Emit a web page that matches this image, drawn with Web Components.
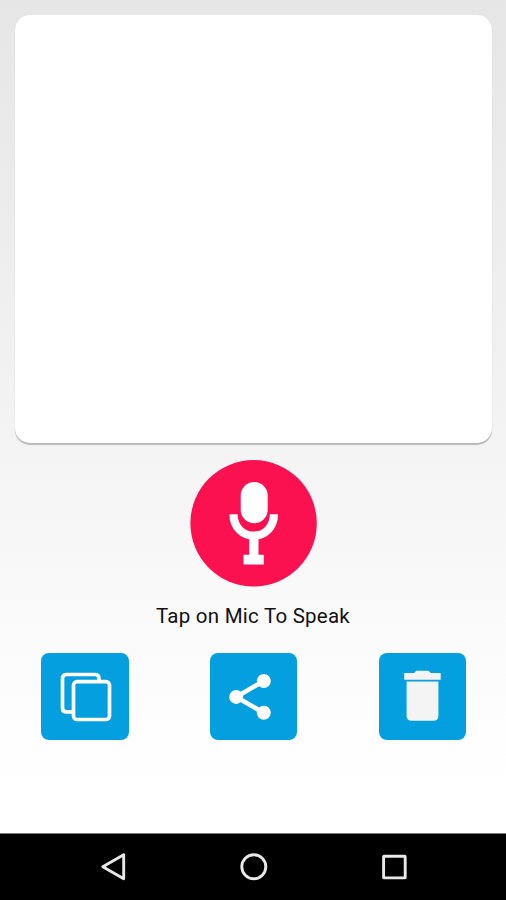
<!DOCTYPE html>
<html lang="en">
<head>
<meta charset="utf-8">
<title>Speech to Text</title>
<style>html,body{margin:0;height:100%;overflow:hidden}</style>
</head>
<body>
<speech-app></speech-app>
<script>
const define = (name, html) => customElements.define(name, class extends HTMLElement {
  constructor() {
    super();
    this.attachShadow({ mode: 'open' }).innerHTML = html;
  }
});

define('text-card', `<style>
  :host{display:block;box-sizing:border-box;width:477px;height:428px;margin-left:1px;border-radius:15px;background:#fff;
    box-shadow:0 1.5px 1px #b8b8b8,0 0 1px #e6e6e6}
</style><slot></slot>`);

define('mic-button', `<style>
  :host{display:block;width:127px;height:127px}
  svg{display:block}
</style>
<svg width="127" height="127" viewBox="190 460 127 127" role="img" aria-label="Microphone">
  <circle cx="253.6" cy="523.3" r="63.2" fill="#fb1150"/>
  <rect x="240.7" y="482" width="27" height="41.2" rx="13.5" fill="#fff"/>
  <path d="M233.5 514.2C233.5 527 242.5 535.7 253.8 535.7S273.9 527 273.9 514.2" fill="none" stroke="#fff" stroke-width="8.2"/>
  <path d="M249.2 536h9.300v18.700h5.300v9.700h-20.300v-9.700h5.700z" fill="#fff"/>
</svg>`);

define('action-tile', `<style>
  :host{display:block;width:87.5px;height:87px;border-radius:8px;background:#049fde;overflow:hidden}
  ::slotted(svg){display:block;width:87.5px;height:87.5px}
</style><slot></slot>`);

define('nav-bar', `<style>
  :host{display:flex;box-sizing:border-box;height:67px;background:#000;border-top:1px solid #777;
    justify-content:space-between;padding:17px 96px 0 97px}
  svg{display:block;fill:none;stroke:#e8e8e8;stroke-width:2.9}
</style>
<svg width="32" height="32" viewBox="97 851 32 32"><path d="M102.8 866.700L123.700 854.700V878.700Z" stroke-linejoin="round"/></svg>
<svg width="32" height="32" viewBox="237.5 851 32 32"><circle cx="253.3" cy="866.7" r="12"/></svg>
<svg width="32" height="32" viewBox="378 851 32 32"><rect x="383.6" y="856.3" width="21.6" height="21.6" rx=".5"/></svg>`);

define('speech-app', `<style>
  :host{display:flex;flex-direction:column;width:506px;height:900px;
    background:linear-gradient(#e6e6e6 0,#f4f4f4 450px,#fcfcfc 670px,#fff 790px);
    font-family:Roboto,"Liberation Sans",sans-serif;color:#111}
  main{flex:1;display:flex;flex-direction:column;align-items:center;padding-top:15px}
  mic-button{margin-top:17px}
  p{margin:16.5px 0 0;font-size:20.5px;letter-spacing:.24px;line-height:24px;white-space:nowrap}
  .actions{display:flex;justify-content:space-between;width:425px;margin:25px 0 0 1px}
</style>
<main>
  <text-card></text-card>
  <mic-button></mic-button>
  <p>Tap on Mic To Speak</p>
  <div class="actions">
    <action-tile>
      <svg viewBox="41 652.5 87.5 87.5" fill="none" stroke="#fff" stroke-width="3.7">
        <path d="M72.5 711.400H66.500Q62.500 711.400 62.500 707.400V678Q62.500 674 66.500 674H95Q99 674 99 678V681"/>
        <rect x="73.500" y="681.2" width="36" height="37.8" rx="3.5"/>
      </svg>
    </action-tile>
    <action-tile>
      <svg viewBox="209.5 652.5 87.5 87.5" fill="#fff">
        <path d="M263.3 680.4L235.7 696.4L263.3 712.4" fill="none" stroke="#fff" stroke-width="4.6"/>
        <circle cx="235.7" cy="696.4" r="7"/><circle cx="263.3" cy="680.5" r="7"/><circle cx="263.3" cy="712.3" r="7"/>
      </svg>
    </action-tile>
    <action-tile>
      <svg viewBox="378.3 652.5 87.5 87.5" fill="#f4f4f4">
        <path d="M403.500 672.400H413.500L415.500 670.200H428L430 672.400H440V679.200H403.500Z"/>
        <path d="M405.900 681H437.700V715.200Q437.700 720.200 432.700 720.200H410.900Q405.900 720.200 405.900 715.200Z"/>
      </svg>
    </action-tile>
  </div>
</main>
<nav-bar></nav-bar>`);
</script>
</body>
</html>
